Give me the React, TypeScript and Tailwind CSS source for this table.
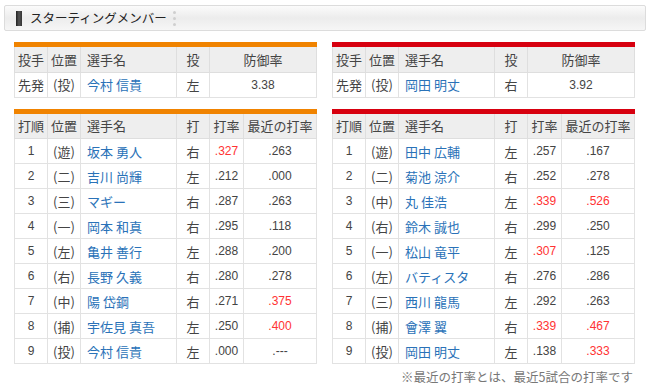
import React from "react";

type Batter = { o: string; pos: string; name: string; hand: string; avg: string; avgRed?: boolean; recent: string; recentRed?: boolean };

const giants: Batter[] = [
  { o: "1", pos: "遊", name: "坂本 勇人", hand: "右", avg: ".327", avgRed: true, recent: ".263" },
  { o: "2", pos: "二", name: "吉川 尚輝", hand: "左", avg: ".212", recent: ".000" },
  { o: "3", pos: "三", name: "マギー", hand: "右", avg: ".287", recent: ".263" },
  { o: "4", pos: "一", name: "岡本 和真", hand: "右", avg: ".295", recent: ".118" },
  { o: "5", pos: "左", name: "亀井 善行", hand: "左", avg: ".288", recent: ".200" },
  { o: "6", pos: "右", name: "長野 久義", hand: "右", avg: ".280", recent: ".278" },
  { o: "7", pos: "中", name: "陽 岱鋼", hand: "右", avg: ".271", recent: ".375", recentRed: true },
  { o: "8", pos: "捕", name: "宇佐見 真吾", hand: "左", avg: ".250", recent: ".400", recentRed: true },
  { o: "9", pos: "投", name: "今村 信貴", hand: "左", avg: ".000", recent: ".---" },
];

const carp: Batter[] = [
  { o: "1", pos: "遊", name: "田中 広輔", hand: "左", avg: ".257", recent: ".167" },
  { o: "2", pos: "二", name: "菊池 涼介", hand: "右", avg: ".252", recent: ".278" },
  { o: "3", pos: "中", name: "丸 佳浩", hand: "左", avg: ".339", avgRed: true, recent: ".526", recentRed: true },
  { o: "4", pos: "右", name: "鈴木 誠也", hand: "右", avg: ".299", recent: ".250" },
  { o: "5", pos: "一", name: "松山 竜平", hand: "左", avg: ".307", avgRed: true, recent: ".125" },
  { o: "6", pos: "左", name: "バティスタ", hand: "右", avg: ".276", recent: ".286" },
  { o: "7", pos: "三", name: "西川 龍馬", hand: "左", avg: ".292", recent: ".263" },
  { o: "8", pos: "捕", name: "會澤 翼", hand: "右", avg: ".339", avgRed: true, recent: ".467", recentRed: true },
  { o: "9", pos: "投", name: "岡田 明丈", hand: "左", avg: ".138", recent: ".333", recentRed: true },
];

const th = "h-[25px] border border-[#dedede] bg-[#eeeeee] font-normal text-[#444] text-center p-0";
const td = "h-[25px] border border-[#e2e2e2] bg-white text-[#444] text-center p-0";
const num = "font-['Liberation_Sans',sans-serif] text-[12px]";
const nameCls = "h-[25px] border border-[#e2e2e2] bg-white text-[#2a72b8] text-left pl-[6px] p-0 whitespace-nowrap";

function PitcherTable({ color, name, hand, era }: { color: string; name: string; hand: string; era: string }) {
  return (
    <div>
      <div className={color + " h-[5px]"} />
      <table className="w-full border-collapse table-fixed">
        <colgroup>
          <col className="w-[33px]" />
          <col className="w-[33px]" />
          <col className="w-[96px]" />
          <col className="w-[33px]" />
          <col />
        </colgroup>
        <thead>
          <tr>
            <th className={th + " border-t-0"}>投手</th>
            <th className={th + " border-t-0"}>位置</th>
            <th className={th + " border-t-0 text-left pl-[6px]"}>選手名</th>
            <th className={th + " border-t-0"}>投</th>
            <th className={th + " border-t-0"}>防御率</th>
          </tr>
        </thead>
        <tbody>
          <tr>
            <td className={td}>先発</td>
            <td className={td}>(投)</td>
            <td className={nameCls}>{name}</td>
            <td className={td}>{hand}</td>
            <td className={td + " " + num}>{era}</td>
          </tr>
        </tbody>
      </table>
    </div>
  );
}

function LineupTable({ color, rows }: { color: string; rows: Batter[] }) {
  return (
    <div>
      <div className={color + " h-[5px]"} />
      <table className="w-full border-collapse table-fixed">
        <colgroup>
          <col className="w-[33px]" />
          <col className="w-[33px]" />
          <col className="w-[96px]" />
          <col className="w-[33px]" />
          <col className="w-[34px]" />
          <col />
        </colgroup>
        <thead>
          <tr>
            <th className={th + " border-t-0"}>打順</th>
            <th className={th + " border-t-0"}>位置</th>
            <th className={th + " border-t-0 text-left pl-[6px]"}>選手名</th>
            <th className={th + " border-t-0"}>打</th>
            <th className={th + " border-t-0"}>打率</th>
            <th className={th + " border-t-0"}>最近の打率</th>
          </tr>
        </thead>
        <tbody>
          {rows.map((r) => (
            <tr key={r.o}>
              <td className={td + " " + num}>{r.o}</td>
              <td className={td}>({r.pos})</td>
              <td className={nameCls}>{r.name}</td>
              <td className={td}>{r.hand}</td>
              <td className={td + " " + num + (r.avgRed ? " !text-[#ff3333]" : "")}>{r.avg}</td>
              <td className={td + " " + num + (r.recentRed ? " !text-[#ff3333]" : "")}>{r.recent}</td>
            </tr>
          ))}
        </tbody>
      </table>
    </div>
  );
}

export default function App() {
  return (
    <div className="w-[650px] h-[390px] bg-white font-['Noto_Sans_CJK_JP',sans-serif] text-[13px] leading-none text-[#333] overflow-hidden">
      <div className="pt-[5px] px-[4px]">
        <div className="h-[26px] border border-[#dcdcdc] rounded-[2px] bg-gradient-to-b from-[#fbfbfb] via-[#ececec] to-[#f6f6f6] flex items-center pl-[11px]">
          <div className="w-[6px] h-[15px] bg-gradient-to-r from-[#222] via-[#555] to-[#333]" />
          <span className="ml-[8px] text-[12.5px] text-[#222]">スターティングメンバー</span>
          <div className="ml-[6px] flex flex-col gap-[3px]">
            <div className="w-[3px] h-[3px] rounded-full bg-[#cfcfcf]" />
            <div className="w-[3px] h-[3px] rounded-full bg-[#cfcfcf]" />
            <div className="w-[3px] h-[3px] rounded-full bg-[#cfcfcf]" />
          </div>
        </div>
      </div>
      <div className="grid grid-cols-2 gap-x-[15px] pl-[14px] pr-[15px] mt-[11px]">
        <PitcherTable color="bg-[#f08300]" name="今村 信貴" hand="左" era="3.38" />
        <PitcherTable color="bg-[#d7000f]" name="岡田 明丈" hand="右" era="3.92" />
      </div>
      <div className="grid grid-cols-2 gap-x-[15px] pl-[14px] pr-[15px] mt-[11px]">
        <LineupTable color="bg-[#f08300]" rows={giants} />
        <LineupTable color="bg-[#d7000f]" rows={carp} />
      </div>
      <div className="pr-[17px] mt-[7px] text-right text-[12.5px] text-[#777]">※最近の打率とは、最近5試合の打率です</div>
    </div>
  );
}
